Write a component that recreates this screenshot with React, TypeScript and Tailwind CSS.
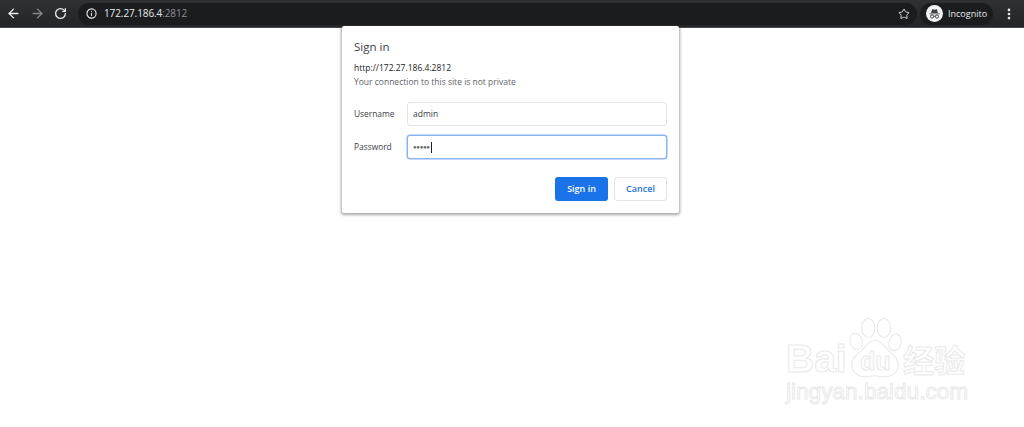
import { ArrowLeft, ArrowRight, RotateCw, Info, Star, EllipsisVertical } from "lucide-react";

const font = "font-['Open_Sans','Liberation_Sans',sans-serif]";

function IncognitoIcon() {
  return (
    <svg width="17" height="17" viewBox="0 0 18 18">
      <circle cx="9" cy="9" r="9" fill="#f1f3f4" />
      <path d="M3.5 9h11v.9h-11zM5.4 8.4l1-3.6c.1-.3.4-.4.7-.3l1.9.5 1.9-.5c.3-.1.6 0 .7.3l1 3.6z" fill="#3c4043" />
      <circle cx="6.4" cy="12.2" r="1.7" fill="none" stroke="#3c4043" strokeWidth="1" />
      <circle cx="11.6" cy="12.2" r="1.7" fill="none" stroke="#3c4043" strokeWidth="1" />
      <path d="M8 12h2" stroke="#3c4043" strokeWidth="1" />
    </svg>
  );
}

function Toolbar() {
  return (
    <header className="flex h-7 items-center border-b border-[#4a4b4d] bg-gradient-to-b from-[#303133] to-[#232427] pr-[8px]">
      <div className="flex w-[78px] shrink-0 items-center pl-[6px]">
        <ArrowLeft className="h-[15px] w-[15px] text-[#e8eaed]" strokeWidth={2.2} />
        <ArrowRight className="ml-[9px] h-[15px] w-[15px] text-[#85878a]" strokeWidth={2.2} />
        <RotateCw className="ml-[9px] h-[13px] w-[13px] text-[#e8eaed]" strokeWidth={2.4} />
      </div>
      <div className="flex h-[22px] w-[839px] shrink-0 items-center rounded-full bg-[#1b1c1e] pl-[8px] pr-[7px]">
        <Info className="h-[11px] w-[11px] text-[#e8eaed]" strokeWidth={2.4} />
        <span className="ml-[7px] text-[10px] font-medium tracking-[-0.1px] text-[#e8eaed]">
          172.27.186.4<span className="font-normal text-[#8f9194]">:2812</span>
        </span>
        <Star className="ml-auto h-[12px] w-[12px] text-[#d5d7da]" strokeWidth={2} />
      </div>
      <div className="ml-[3px] flex h-[22px] w-[73px] shrink-0 items-center rounded-full bg-[#1b1c1e] pl-[6px]">
        <IncognitoIcon />
        <span className="ml-[5px] text-[9px] text-[#e8eaed]">Incognito</span>
      </div>
      <EllipsisVertical className="ml-auto h-[14px] w-[14px] text-[#e8eaed]" strokeWidth={2.6} />
    </header>
  );
}

function Field({ label, active, children }: { label: string; active?: boolean; children: React.ReactNode }) {
  return (
    <div className="flex items-center">
      <label className="w-[53px] shrink-0 text-[8.4px] text-[#3c4043]">{label}</label>
      <div
        className={`flex h-6 flex-1 items-center rounded-[3px] border bg-white px-[5px] text-[8.5px] text-[#3c4043] ${
          active ? "border-[#8ab4f0] ring-[0.5px] ring-[#8ab4f0]" : "border-[#e3e4e6]"
        }`}
      >
        {children}
      </div>
    </div>
  );
}

function SignInDialog() {
  return (
    <div className="absolute left-[342px] top-[26px] h-[187px] w-[337px] rounded-[2px] bg-white px-3 pt-[14px] shadow-[0_1px_3px_1px_rgba(60,64,67,0.45)]">
      <h1 className="text-[11.5px] leading-[13px] text-[#3c4043]">Sign in</h1>
      <p className="mt-[9px] text-[8.5px] leading-[12px] text-[#202124]">http://172.27.186.4:2812</p>
      <p className="mt-[2px] text-[8.5px] leading-[12px] text-[#5f6368]">Your connection to this site is not private</p>
      <div className="mt-[14px] flex flex-col gap-[9px]">
        <Field label="Username">admin</Field>
        <Field label="Password" active>
          <span className="text-[6px] leading-none tracking-[-0.3px] text-[#5f6368]">●●●●●</span>
          <span className="ml-px h-[11px] w-px bg-[#202124]" />
        </Field>
      </div>
      <div className="mt-[18px] flex justify-end gap-[6px]">
        <button className="h-6 w-[53px] rounded-[3px] bg-[#1a73e8] text-[9px] font-semibold text-white">Sign in</button>
        <button className="h-6 w-[53px] rounded-[3px] border border-[#e3e4e6] bg-white text-[9px] font-semibold text-[#1a73e8]">Cancel</button>
      </div>
    </div>
  );
}

function Watermark() {
  const outline = "text-white [-webkit-text-stroke:1px_#e9e9e9]";
  return (
    <div className="absolute left-[786px] top-[318px] w-[190px] select-none">
      <div className="flex h-[60px] items-end">
        <span className={`w-[61px] text-[39px] font-bold leading-[38px] font-['Liberation_Sans',sans-serif] ${outline}`}>Bai</span>
        <svg width="56" height="60" viewBox="0 0 50 54" className="shrink-0" fill="#fff" stroke="#e9e9e9" strokeWidth="1">
          <ellipse cx="8" cy="21" rx="5.5" ry="7.5" transform="rotate(-15 8 21)" />
          <ellipse cx="19" cy="9" rx="6" ry="8.5" />
          <ellipse cx="33" cy="9" rx="6" ry="8.5" />
          <ellipse cx="43" cy="22" rx="5.5" ry="7.5" transform="rotate(15 43 22)" />
          <path d="M25 20c6 0 8 6 13 10 5 4 8 7 8 12 0 7-6 11-12 11-4 0-6-1-9-1s-5 1-9 1c-6 0-12-4-12-11 0-5 3-8 8-12 5-4 7-10 13-10z" />
        </svg>
        <span className={`absolute left-[74px] top-[31px] text-[25px] font-bold leading-none font-['Liberation_Sans',sans-serif] ${outline}`}>du</span>
        <span className={`text-[31px] font-bold leading-[38px] whitespace-nowrap font-['Noto_Sans_CJK_SC',sans-serif] ${outline}`}>经验</span>
      </div>
      <div className={`mt-px whitespace-nowrap text-[22.6px] leading-[26px] font-['Liberation_Sans',sans-serif] ${outline}`}>jingyan.baidu.com</div>
    </div>
  );
}

export default function App() {
  return (
    <div className={`relative h-[427px] w-[1024px] overflow-hidden bg-white ${font}`}>
      <Toolbar />
      <SignInDialog />
      <Watermark />
    </div>
  );
}
